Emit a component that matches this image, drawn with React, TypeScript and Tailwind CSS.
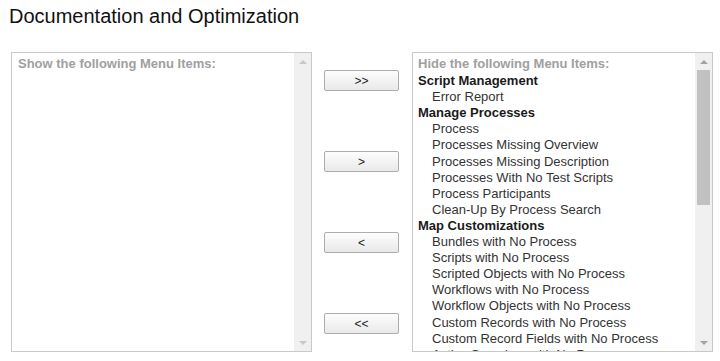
import React from 'react';

type Row = { label: string; kind: 'group' | 'item' };

const hiddenRows: Row[] = [
  { label: 'Script Management', kind: 'group' },
  { label: 'Error Report', kind: 'item' },
  { label: 'Manage Processes', kind: 'group' },
  { label: 'Process', kind: 'item' },
  { label: 'Processes Missing Overview', kind: 'item' },
  { label: 'Processes Missing Description', kind: 'item' },
  { label: 'Processes With No Test Scripts', kind: 'item' },
  { label: 'Process Participants', kind: 'item' },
  { label: 'Clean-Up By Process Search', kind: 'item' },
  { label: 'Map Customizations', kind: 'group' },
  { label: 'Bundles with No Process', kind: 'item' },
  { label: 'Scripts with No Process', kind: 'item' },
  { label: 'Scripted Objects with No Process', kind: 'item' },
  { label: 'Workflows with No Process', kind: 'item' },
  { label: 'Workflow Objects with No Process', kind: 'item' },
  { label: 'Custom Records with No Process', kind: 'item' },
  { label: 'Custom Record Fields with No Process', kind: 'item' },
  { label: 'Active Searches with No Process', kind: 'item' },
];

function Scrollbar({ thumb }: { thumb: boolean }) {
  return (
    <div className="flex w-[17px] shrink-0 flex-col bg-[#f0f0f0]">
      <div className="flex h-[17px] items-center justify-center">
        <div
          className={`h-0 w-0 border-x-[4px] border-b-[4px] border-x-transparent ${
            thumb ? 'border-b-[#a3a3a3]' : 'border-b-[#c8c8c8]'
          }`}
        />
      </div>
      <div className="flex-1 px-[2px]">
        {thumb && <div className="h-[135px] bg-[#c1c1c1]" />}
      </div>
      <div className="flex h-[17px] items-center justify-center">
        <div
          className={`h-0 w-0 border-x-[4px] border-t-[4px] border-x-transparent ${
            thumb ? 'border-t-[#a3a3a3]' : 'border-t-[#c8c8c8]'
          }`}
        />
      </div>
    </div>
  );
}

function MoveButton({ label }: { label: string }) {
  return (
    <button className="h-[21px] w-[75px] rounded-[2px] border border-[#adadad] bg-gradient-to-b from-[#fdfdfd] to-[#e9e9e9] text-[12px] leading-none text-[#222]">
      {label}
    </button>
  );
}

export default function App() {
  return (
    <div className="h-[361px] w-[720px] overflow-hidden bg-white font-['Liberation_Sans',Arial,sans-serif]">
      <h1 className="ml-[9px] mt-[4px] text-[20px] leading-6 font-normal text-[#111]">
        Documentation and Optimization
      </h1>

      <div className="ml-[11px] mt-[24px] flex">
        {/* visible items */}
        <div className="flex h-[300px] w-[301px] border border-[#c9c9c9] bg-white">
          <div className="flex-1 overflow-hidden pl-[6px] pt-[3px] text-[13px] leading-4">
            <div className="font-bold text-[#a0a0a0]">Show the following Menu Items:</div>
          </div>
          <Scrollbar thumb={false} />
        </div>

        {/* move buttons */}
        <div className="ml-[12px] flex flex-col gap-[60px] pt-[18px]">
          <MoveButton label=">>" />
          <MoveButton label=">" />
          <MoveButton label="<" />
          <MoveButton label="<<" />
        </div>

        {/* hidden items */}
        <div className="ml-[13px] flex h-[300px] w-[301px] border border-[#c9c9c9] bg-white">
          <div className="flex-1 overflow-hidden pl-[5px] pt-[3px] text-[13px] leading-[16.1px]">
            <div className="mb-[1px] font-bold text-[#a0a0a0]">Hide the following Menu Items:</div>
            {hiddenRows.map((row, i) =>
              row.kind === 'group' ? (
                <div key={i} className="whitespace-nowrap font-bold text-[#1a1a1a]">
                  {row.label}
                </div>
              ) : (
                <div key={i} className="whitespace-nowrap pl-[14px] text-[#333]">
                  {row.label}
                </div>
              )
            )}
          </div>
          <Scrollbar thumb={true} />
        </div>
      </div>
    </div>
  );
}
